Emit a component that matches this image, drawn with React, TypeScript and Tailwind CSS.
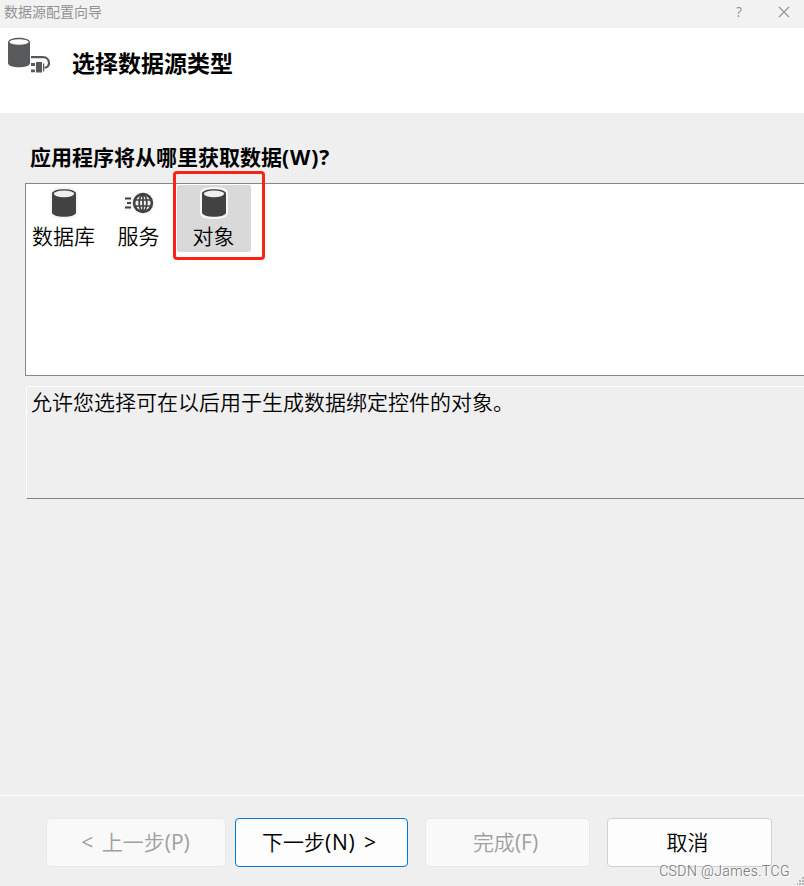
import React from 'react';

interface SourceType {
  label: string;
  icon: React.ReactNode;
  selected?: boolean;
}

const DatabaseIcon = () => (
  <svg className="w-8 h-8" viewBox="0 0 32 32">
    <path
      d="M4 6 C4 0.5 28 0.5 28 6 V26 C28 31.5 4 31.5 4 26 Z"
      fill="#f6f6f6"
      stroke="#f6f6f6"
      strokeWidth="4"
      strokeLinejoin="round"
    />
    <path d="M4 6.5 C4 0.8 28 0.8 28 6.5 V25.5 C28 31.2 4 31.2 4 25.5 Z" fill="#424242" />
    <ellipse cx="16" cy="6.8" rx="10.2" ry="3.4" fill="#f0eff1" />
  </svg>
);

const ServiceIcon = () => (
  <svg className="w-8 h-8" viewBox="0 0 32 32">
    <path d="M0 9 H9 V23 H0 Z" fill="#f6f6f6" />
    <circle cx="20" cy="16" r="11.5" fill="#f6f6f6" />
    <path d="M2 11.5 H8 M4 16 H8 M2 20.5 H8" stroke="#424242" strokeWidth="2" />
    <circle cx="20" cy="16" r="10.2" fill="#424242" />
    <circle cx="20" cy="16" r="7.6" fill="#f0eff1" />
    <g fill="none" stroke="#424242" strokeWidth="1.7">
      <ellipse cx="20" cy="16" rx="3.8" ry="8.2" />
      <path d="M20 8 V24 M12 13 H28 M12 19 H28" />
    </g>
  </svg>
);

const DataSourceIcon = () => (
  <svg className="w-11 h-10 shrink-0" viewBox="0 0 44 40">
    <path d="M1 5.5 C1 -0.8 23 -0.8 23 5.5 V26 C23 31.8 1 31.8 1 26 Z" fill="#58595b" />
    <ellipse cx="12" cy="5" rx="9.6" ry="2.8" fill="#fff" />
    <path d="M24 20.2 H36 C43.5 20.2 44 30.7 37.5 30.7" fill="none" stroke="#58595b" strokeWidth="2.2" />
    <path d="M29 25 H35 V35.5 H29 Z M36 26.5 H37.2 V34.5 H36 Z" fill="#58595b" />
    <path d="M24 27.5 H28 M24 33.8 H28" stroke="#58595b" strokeWidth="2.8" />
  </svg>
);

const sources: SourceType[] = [
  { label: '数据库', icon: <DatabaseIcon /> },
  { label: '服务', icon: <ServiceIcon /> },
  { label: '对象', icon: <DatabaseIcon />, selected: true },
];

const TitleBar = () => (
  <div className="flex h-7 items-start bg-[#f2f2f2] pl-[4px] text-[#929292]">
    <span className="text-[14px] leading-[24px]">数据源配置向导</span>
    <span className="ml-auto w-[8px] text-center text-[14px] leading-[24px]">?</span>
    <svg className="ml-[35px] mr-[14px] mt-[6px] h-3 w-3" viewBox="0 0 12 12">
      <path d="M1 1 L11 11 M11 1 L1 11" stroke="#929292" strokeWidth="1.1" />
    </svg>
  </div>
);

const SourceItem: React.FC<{ source: SourceType }> = ({ source }) => (
  <div
    className={`relative flex h-[67px] w-[74px] flex-col items-center rounded-[2px] pt-[2px] ${
      source.selected ? 'bg-[#d9d9d9]' : ''
    }`}
  >
    {source.icon}
    <span className="mt-[2px] mr-[1px] whitespace-nowrap text-[21px] font-[350] leading-[30px]">{source.label}</span>
    {/* Highlight frame */}
    {source.selected && (
      <div className="absolute -left-[4px] -top-[14px] h-[89px] w-[92px] rounded-[4px] border-[3px] border-[#fb2316]" />
    )}
  </div>
);

export default function App() {
  return (
    <div className="relative flex h-[886px] w-[804px] flex-col overflow-hidden bg-[#efefef] font-['Open_Sans','Noto_Sans_CJK_SC',sans-serif] text-black">
      <TitleBar />

      <header className="flex h-[85px] items-start bg-white pl-[7px] pt-[9px]">
        <DataSourceIcon />
        <h1 className="ml-[21px] mt-[9px] text-[23px] font-bold leading-[34px]">选择数据源类型</h1>
      </header>

      <main className="flex flex-1 flex-col pl-[25px]">
        <h2 className="mt-[28px] h-[42px] pl-[5px] text-[21px] font-bold leading-[32px]">
          应用程序将从哪里获取数据<span className="tracking-[0.9px]">(W)?</span>
        </h2>
        <div className="flex h-[193px] gap-px border-y border-l border-[#828790] bg-white pl-px pt-px">
          {sources.map((source) => (
            <SourceItem key={source.label} source={source} />
          ))}
        </div>
        <div className="ml-px mt-[10px] h-[113px] border-b border-l border-t border-b-[#828282] border-l-white border-t-white pl-[4px] text-[21px] font-[350] leading-[31px]">
          允许您选择可在以后用于生成数据绑定控件的对象。
        </div>
      </main>

      <footer className="flex h-[91px] border-t border-white pl-[46px] pt-[22px] text-[21px]">
        <button className="h-[49px] w-[180px] rounded-[4px] border border-[#e8e8e8] bg-[#f9f9f9] pr-[1px] text-[#a0a0a0]">
          <span className="[word-spacing:3px]">&lt; <span className="font-[350]">上一步</span>(P)</span>
        </button>
        <button className="ml-[9px] h-[49px] w-[173px] rounded-[4px] border border-[#0078d4] bg-[#fdfdfd] pr-[5px]">
          <span className="[word-spacing:3px]"><span className="font-[350]">下一步</span><span className="tracking-[0.8px]">(N)</span> &gt;</span>
        </button>
        <button className="ml-[17px] h-[49px] w-[165px] rounded-[4px] border border-[#e8e8e8] bg-[#f9f9f9] pr-[4px] text-[#a0a0a0]">
          <span className="font-[350]">完成</span>(F)
        </button>
        <button className="ml-[17px] h-[49px] w-[165px] rounded-[4px] border border-[#d0d0d0] bg-[#fdfdfd] pr-[4px] font-[350]">
          取消
        </button>
      </footer>

      <span className="absolute bottom-[5px] right-[14px] font-['Roboto',sans-serif] text-[14px] font-light leading-[20px] tracking-[0.4px] text-[#707070] [text-shadow:1px_1px_0_#fff]">
        CSDN @James.TCG
      </span>
      <svg className="absolute bottom-0 right-0 h-[9px] w-[7px]" viewBox="0 0 7 9">
        <path d="M5 0 h2 v2 h-2 Z M2 3 h2 v2 h-2 Z M5 3 h2 v2 h-2 Z M0 6 h1 v2 h-1 Z M2 6 h2 v2 h-2 Z M5 6 h2 v2 h-2 Z" fill="#b5b5b5" />
      </svg>
    </div>
  );
}
